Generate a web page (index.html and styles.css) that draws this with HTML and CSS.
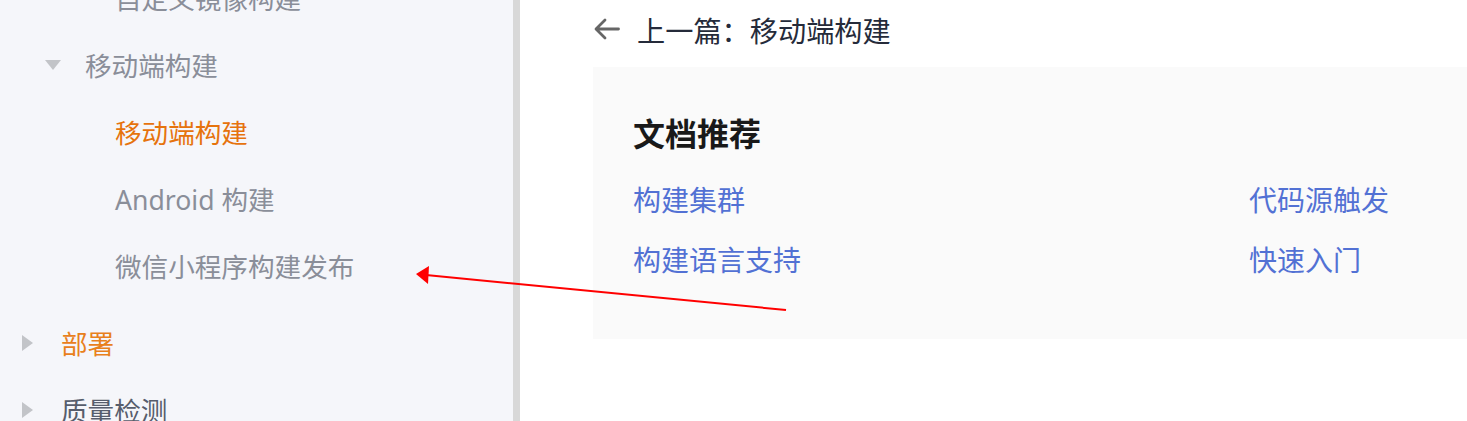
FILE: index.html
```html
<!DOCTYPE html>
<html lang="zh-CN">
<head>
    <meta charset="UTF-8">
    <meta name="viewport" content="width=device-width, initial-scale=1.0">
    <title>移动端构建</title>
    <link rel="stylesheet" href="styles.css">
</head>
<body>
    <aside class="sidebar">
        <ul class="tree">
            <li class="tree-item level-3">自定义镜像构建</li>
            <li class="tree-item level-2 open">
                <span class="caret caret-down"></span>移动端构建
            </li>
            <li class="tree-item level-3 active">移动端构建</li>
            <li class="tree-item level-3">Android 构建</li>
            <li class="tree-item level-3 group-end">微信小程序构建发布</li>
            <li class="tree-item level-1 highlight">
                <span class="caret caret-right"></span>部署
            </li>
            <li class="tree-item level-1 dark">
                <span class="caret caret-right"></span>质量检测
            </li>
        </ul>
    </aside>
    <div class="scrollbar"></div>
    <main class="content">
        <a class="prev-link" href="#">
            <svg class="prev-icon" width="28" height="24" viewBox="0 0 28 24">
                <path d="M25.5 12H3.5M12 3L3 12L12 21" fill="none" stroke="#666" stroke-width="2.8" stroke-linecap="round" stroke-linejoin="round"/>
            </svg>
            <span>上一篇：移动端构建</span>
        </a>
        <section class="recommend">
            <h2>文档推荐</h2>
            <div class="recommend-links">
                <a href="#">构建集群</a>
                <a href="#">代码源触发</a>
                <a href="#">构建语言支持</a>
                <a href="#">快速入门</a>
            </div>
        </section>
    </main>
    <svg class="annotation" width="1467" height="421" viewBox="0 0 1467 421">
        <line x1="786" y1="310" x2="426" y2="275" stroke="#ff0000" stroke-width="2"/>
        <polygon points="416,274 429,266 428,284" fill="#ff0000"/>
    </svg>
</body>
</html>
```

FILE: styles.css
```css
body {
    margin: 0;
    height: 421px;
    overflow: hidden;
    display: flex;
    font-family: "Noto Sans", "Noto Sans CJK SC", sans-serif;
    background-color: #fff;
    position: relative;
}

.sidebar {
    width: 513px;
    flex-shrink: 0;
    background-color: #f5f6fa;
    overflow: hidden;
}

.scrollbar {
    width: 7px;
    flex-shrink: 0;
    background-color: #d8d8d8;
}

.tree {
    list-style: none;
    margin: -36px 0 0 0;
    padding: 0;
}

.tree-item {
    height: 67px;
    display: flex;
    align-items: center;
    font-size: 26.6px;
    color: #8a8e99;
    white-space: nowrap;
}

.tree-item.level-1 {
    padding-left: 22px;
}

.tree-item.level-2 {
    padding-left: 45px;
}

.tree-item.level-3 {
    padding-left: 115px;
}

.tree-item.group-end {
    margin-bottom: 10px;
}

.tree-item.active {
    color: #e6730d;
}

.tree-item.highlight {
    color: #e8801c;
}

.tree-item.dark {
    color: #575d6c;
}

.caret {
    display: inline-block;
    width: 0;
    height: 0;
}

.caret-down {
    border-left: 8px solid transparent;
    border-right: 8px solid transparent;
    border-top: 10px solid #c2c4c8;
    margin-right: 24px;
}

.caret-right {
    border-top: 8px solid transparent;
    border-bottom: 8px solid transparent;
    border-left: 11px solid #c2c4c8;
    margin-right: 28px;
}

.content {
    flex: 1;
    padding-left: 73px;
    min-width: 0;
}

.prev-link {
    display: flex;
    align-items: center;
    height: 58px;
    color: #252b3a;
    text-decoration: none;
    font-size: 28.2px;
}

.prev-icon {
    margin-right: 16px;
}

.recommend {
    margin-top: 9px;
    background-color: #fafafa;
    padding: 45px 0 57px 40px;
    width: 1000px;
}

.recommend h2 {
    margin: 0 0 22px 0;
    font-size: 32px;
    line-height: 44px;
    font-weight: bold;
    color: #191919;
}

.recommend-links {
    display: grid;
    grid-template-columns: 616px 1fr;
    row-gap: 16px;
}

.recommend-links a {
    font-size: 28px;
    line-height: 44px;
    color: #5271d4;
    text-decoration: none;
}

.annotation {
    position: absolute;
    left: 0;
    top: 0;
    pointer-events: none;
}
```
